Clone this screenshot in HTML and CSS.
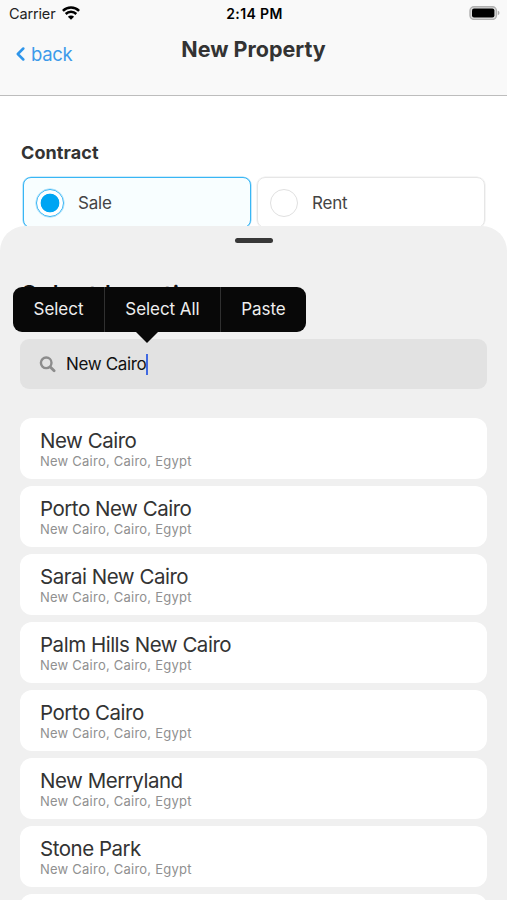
FILE: index.html
```html
<!DOCTYPE html>
<html lang="en">
<head>
<meta charset="utf-8">
<title>New Property</title>
<link rel="stylesheet" href="styles.css">
</head>
<body>
<div class="screen">
  <header class="header">
    <div class="status">
      <div class="carrier"><span>Carrier</span>
        <svg width="18" height="14" viewBox="0 0 18 14" fill="none" stroke="#000" stroke-width="2.5"><path d="M.9 4.9a11.6 11.6 0 0 1 16.2 0M3.7 8a7.6 7.6 0 0 1 10.6 0"/><path d="M9 13.8 5.9 10.7a4.4 4.4 0 0 1 6.2 0z" fill="#000" stroke="none"/></svg>
      </div>
      <div class="time">2:14 PM</div>
      <svg class="battery" width="31" height="14" viewBox="0 0 31 14"><rect x="1" y=".8" width="26.4" height="12.6" rx="4" fill="#ddd" stroke="#b0b0b0" stroke-width="1.4"/><rect x="3" y="2.6" width="22.4" height="9" rx="2" fill="#000"/><path d="M28.8 4.8c2.2.6 2.2 3.8 0 4.4z" fill="#aaa"/></svg>
    </div>
    <nav class="nav">
      <div class="back"><svg width="9" height="14" viewBox="0 0 9 14" fill="none" stroke="#2f95ea" stroke-width="2.5" stroke-linecap="round" stroke-linejoin="round"><path d="M7.3 1.5 1.8 7l5.5 5.5"/></svg><span>back</span></div>
      <h1 class="title">New Property</h1>
    </nav>
  </header>
  <main class="form">
    <h2 class="label">Contract</h2>
    <div class="options">
      <div class="option selected"><i class="radio"></i><span>Sale</span></div>
      <div class="option"><i class="radio"></i><span>Rent</span></div>
    </div>
  </main>
  <section class="sheet">
    <div class="handle"></div>
    <h2 class="heading">Select Location</h2>
    <div class="search">
      <svg width="17" height="17" viewBox="0 0 17 17" fill="none" stroke="#8c8c8c" stroke-width="2.4" stroke-linecap="round"><circle cx="7.2" cy="6.8" r="5.3"/><path d="m11.3 10.9 3.8 3.8" stroke-width="2.8"/></svg>
      <span class="query">New Cairo</span><i class="caret"></i>
      <div class="menu"><span>Select</span><span>Select All</span><span>Paste</span></div>
    </div>
    <div class="results">
      <div class="result"><b>New Cairo</b><small>New Cairo, Cairo, Egypt</small></div>
      <div class="result"><b>Porto New Cairo</b><small>New Cairo, Cairo, Egypt</small></div>
      <div class="result"><b>Sarai New Cairo</b><small>New Cairo, Cairo, Egypt</small></div>
      <div class="result"><b>Palm Hills New Cairo</b><small>New Cairo, Cairo, Egypt</small></div>
      <div class="result"><b>Porto Cairo</b><small>New Cairo, Cairo, Egypt</small></div>
      <div class="result"><b>New Merryland</b><small>New Cairo, Cairo, Egypt</small></div>
      <div class="result"><b>Stone Park</b><small>New Cairo, Cairo, Egypt</small></div>
      <div class="result"></div>
    </div>
  </section>
</div>
</body>
</html>
```
FILE: styles.css
```css
* { box-sizing: border-box; }
body { margin: 0; font-family: Inter, "Liberation Sans", sans-serif; color: #333; background: #fff; }
h1, h2 { margin: 0; }
svg { display: block; flex: none; }
.screen { height: 900px; overflow: hidden; display: flex; flex-direction: column; }
.header { height: 96px; flex: none; background: #f9f9f9; border-bottom: 1px solid #bdbdbd; }
.status { height: 27px; padding: 0 7px 0 9px; display: grid; grid-template-columns: 1fr auto 1fr; align-items: center; color: #000; }
.carrier { display: flex; align-items: center; gap: 7px; font-size: 14.5px; letter-spacing: -.15px; color: #222; }
.carrier svg { margin-top: -2px; }
.time { font-size: 14px; font-weight: 600; letter-spacing: .4px; }
.battery { justify-self: end; margin-top: -1px; }
.nav { display: grid; grid-template-columns: 1fr auto 1fr; padding: 0 16px; }
.back { display: flex; align-items: center; gap: 6px; height: 53px; color: #3d9bea; font-size: 18.5px; letter-spacing: -.35px; }
.title { line-height: 44px; font-size: 21.5px; font-weight: 700; letter-spacing: 0; }
.form { height: 130px; flex: none; padding: 46px 21px 0; }
.label { font-size: 18px; line-height: 22px; font-weight: 700; letter-spacing: .1px; }
.options { display: flex; gap: 6px; padding: 13px 0 0 2px; }
.option { width: 228px; height: 51px; border: 1px solid #e6e6e6; box-shadow: 0 0 0 .6px #eee; border-radius: 8px; padding: 0 12px; display: flex; align-items: center; gap: 14px; font-size: 17px; letter-spacing: -.2px; color: #444; }
.selected { border-color: #38b6f5; box-shadow: 0 0 0 .6px #9edaf8; background: #f8feff; }
.radio { width: 28px; height: 28px; border: 1px solid #e0e0e0; border-radius: 50%; background: #fff; }
.selected .radio { border-color: #38b6f5; box-shadow: 0 0 0 .5px #9edaf8; background: radial-gradient(circle, #00a5f3 9px, #fff 9.7px); }
.sheet { flex: 1; min-height: 0; background: #f0f0f0; border-radius: 25px 25px 0 0; padding: 12px 20px 0; z-index: 1; }
.handle { width: 38px; height: 5px; margin: 0 auto; border-radius: 3px; background: #383838; }
.heading { margin: 36px 0 0 1px; height: 60px; line-height: 32px; font-size: 25px; font-weight: 500; letter-spacing: .3px; color: #111; }
.search { position: relative; height: 50px; border-radius: 9px; background: #e2e2e2; padding: 0 19px; display: flex; align-items: center; color: #111; font-size: 17px; }
.query { margin-left: 10px; letter-spacing: -.35px; }
.caret { width: 2px; height: 21px; background: #4169e1; }
.menu { position: absolute; left: -7px; top: -52px; width: 293px; height: 45px; background: #080808; border-radius: 9px; display: grid; grid-template-columns: 91px 116px 1fr; color: #eee; font-size: 17px; line-height: 45px; letter-spacing: -.05px; text-align: center; }
.menu span + span { border-left: 1px solid #303030; }
.menu::after { content: ""; position: absolute; left: 122px; top: 44px; border: 12px solid transparent; border-top-color: #080808; border-bottom: 0; }
.results { margin-top: 29px; display: grid; gap: 7px; }
.result { height: 61px; border-radius: 12px; background: #fff; padding: 10px 20px 0; }
.result b, .result small { display: block; white-space: nowrap; }
.result b { font-size: 20.5px; line-height: 26px; font-weight: 400; letter-spacing: -.48px; color: #333; }
.result small { font-size: 13px; line-height: 14px; letter-spacing: .23px; color: #909090; }
```
